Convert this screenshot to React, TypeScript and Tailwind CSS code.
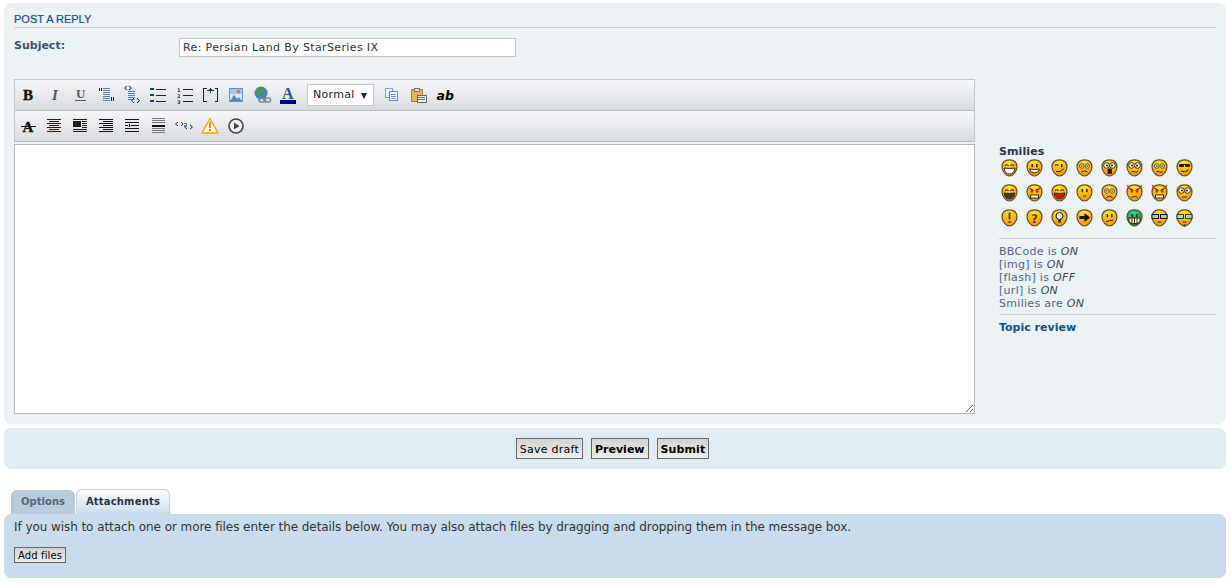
import React from "react";

const IconBox = ({ children, w = 20 }: { children: React.ReactNode; w?: number }) => (
  <svg width={w} height="20" viewBox={`0 0 ${w} 20`} shapeRendering="crispEdges" className="block shrink-0">{children}</svg>
);
const Lines = ({ ys, x1, x2, c = "#222", h = 1 }: { ys: number[]; x1: number; x2: number; c?: string; h?: number }) => (
  <>{ys.map((y) => <rect key={y} x={x1} y={y} width={x2 - x1} height={h} fill={c} />)}</>
);

const T1 = [
  <IconBox key="b"><text x="5" y="15" fontFamily="Liberation Serif" fontWeight="900" fontSize="15" fill="#111" stroke="#111" strokeWidth=".4" shapeRendering="auto">B</text></IconBox>,
  <IconBox key="i"><text x="8" y="15" fontFamily="Liberation Serif" fontStyle="italic" fontWeight="700" fontSize="15" fill="#555" shapeRendering="auto">I</text></IconBox>,
  <IconBox key="u"><text x="6" y="13" fontFamily="Liberation Serif" fontWeight="700" fontSize="13" fill="#555" shapeRendering="auto">U</text><rect x="5" y="15" width="11" height="1" fill="#555" /></IconBox>,
  <IconBox key="q"><rect x="3" y="3" width="1" height="3" fill="#222"/><rect x="5" y="3" width="1" height="3" fill="#222"/><Lines ys={[3,5,7,9,11,13,15]} x1={7} x2={14} c="#5a7fc4"/><rect x="15" y="12" width="1" height="4" fill="#222"/><rect x="17" y="12" width="1" height="4" fill="#222"/></IconBox>,
  <IconBox key="c">
    <path d="M5 1 L2.5 3 L5 5 M7 1 L9.5 3 L7 5" fill="none" stroke="#222" shapeRendering="auto"/>
    <Lines ys={[6,8,10,12,14]} x1={6} x2={13} c="#5a7fc4"/>
    <path d="M12 13 L9.5 15.5 L12 18 M15 13 L17.5 15.5 L15 18" fill="none" stroke="#222" shapeRendering="auto"/>
  </IconBox>,
  <IconBox key="ul"><Lines ys={[3,9,15]} x1={2} x2={6} c="#153a8a" h={2}/><Lines ys={[4,10,16]} x1={8} x2={18} c="#222"/></IconBox>,
  <IconBox key="ol">
    <g fontFamily="DejaVu Sans" fontWeight="700" fontSize="5" fill="#153a8a" shapeRendering="auto"><text x="3" y="6.5">1</text><text x="3" y="12.5">2</text><text x="3" y="18.5">3</text></g>
    <Lines ys={[4,10,16]} x1={9} x2={19} c="#222"/>
  </IconBox>,
  <IconBox key="li">
    <path d="M6.5 3.5H3.5V16.5H6.5M14.5 3.5H17.5V16.5H14.5" fill="none" stroke="#222"/>
    <path d="M7 5.5H14M10 3V8M9 4H12" stroke="#153a8a" fill="none"/>
  </IconBox>,
  <IconBox key="img">
    <rect x="3.5" y="3.5" width="13" height="13" fill="#dbe7f3" stroke="#6b8fb5"/>
    <path d="M4 9H16V4H4Z" fill="#a9c7e6"/>
    <rect x="11" y="5" width="3" height="3" fill="#e8743a"/>
    <path d="M4 16 L8 10 L13 16Z M9 16 L13 12 L16 16Z" fill="#5d84ad" shapeRendering="auto"/>
  </IconBox>,
  <IconBox key="url">
    <circle cx="9" cy="8" r="6.5" fill="#3f83c9" shapeRendering="auto"/>
    <path d="M5 4 L10 2 L13 6 L9 8 L10 12 L6 11 L4 7Z" fill="#4d9a3e" shapeRendering="auto"/>
    <g fill="none" stroke="#7a8590" strokeWidth="1.5" shapeRendering="auto"><rect x="7" y="13" width="6.5" height="4" rx="2"/><rect x="12" y="13" width="6.5" height="4" rx="2"/></g>
  </IconBox>,
  <IconBox key="a"><text x="4" y="14" fontFamily="Liberation Serif" fontWeight="700" fontSize="16" fill="#33548f" shapeRendering="auto">A</text><rect x="2" y="15" width="16" height="4" fill="#00008b"/></IconBox>,
];

const T2 = [
  <IconBox key="s"><text x="4.5" y="16" fontFamily="Liberation Serif" fontWeight="900" fontSize="15" fill="#111" stroke="#111" strokeWidth=".3" shapeRendering="auto">A</text><rect x="3" y="10" width="15" height="1" fill="#111"/></IconBox>,
  <IconBox key="ac"><Lines ys={[3,7,11,15]} x1={3} x2={17} c="#2a1a14"/><Lines ys={[5,9,13]} x1={5} x2={15} c="#2a1a14"/></IconBox>,
  <IconBox key="fl"><Lines ys={[3,13,15]} x1={3} x2={17} c="#2a1a14"/><rect x="3" y="5" width="8" height="6" fill="#2a1a14"/><Lines ys={[5,7,9,11]} x1={12} x2={17} c="#2a1a14"/></IconBox>,
  <IconBox key="ar"><Lines ys={[3,7,11,15]} x1={3} x2={17} c="#111"/><Lines ys={[5,9,13]} x1={7} x2={17} c="#111"/></IconBox>,
  <IconBox key="in"><Lines ys={[3,6,12,15]} x1={3} x2={17} c="#111"/><Lines ys={[9]} x1={3} x2={6} c="#111"/><Lines ys={[9]} x1={9} x2={17} c="#111"/><rect x="7" y="8" width="1" height="3" fill="#111"/></IconBox>,
  <IconBox key="hr"><Lines ys={[2,4,6,12,14,16]} x1={4} x2={17} c="#777"/><rect x="4" y="9" width="13" height="2" fill="#111"/></IconBox>,
  <IconBox key="cd">
    <path d="M4 6 L1.5 8 L4 10 M7 6 L9 8 L7 10 M13 9 L10.5 11 L13 13 M16 9 L18.5 11 L16 13" fill="none" stroke="#333" shapeRendering="auto"/>
    <path d="M10 7.5H12.5V9H10V10.5H12.5" fill="none" stroke="#5a7fc4" />
  </IconBox>,
  <IconBox key="w">
    <path d="M10 2.5 L18 17 H2Z" fill="#fff8df" stroke="#f5a400" strokeWidth="1.3" strokeLinejoin="round" shapeRendering="auto"/>
    <rect x="9" y="6" width="2" height="6" fill="#e88d00"/><rect x="9" y="13" width="2" height="2" fill="#e88d00"/>
  </IconBox>,
  <IconBox key="p">
    <circle cx="10" cy="10" r="7" fill="#eef0f2" stroke="#444" strokeWidth="1.6" shapeRendering="auto"/>
    <path d="M8 6.5 L13.5 10 L8 13.5Z" fill="#444" shapeRendering="auto"/>
  </IconBox>,
];

const T3 = [
  <IconBox key="cp">
    <rect x="3.5" y="3.5" width="7" height="9" fill="#eef4fc" stroke="#7da0d6"/>
    <rect x="7.5" y="6.5" width="8" height="9" fill="#fafcff" stroke="#5f8ccc"/>
    <Lines ys={[9,11,13]} x1={9} x2={14} c="#5f8ccc"/>
  </IconBox>,
  <IconBox key="pa">
    <rect x="3" y="4" width="11" height="12" fill="#e3b84a" stroke="#a08530" />
    <rect x="6" y="3" width="5" height="3" fill="#d9d9cc" stroke="#777"/>
    <rect x="9" y="10" width="9" height="7" fill="#eeeeee" stroke="#666"/>
    <Lines ys={[12,14]} x1={10} x2={17} c="#777"/>
  </IconBox>,
  <IconBox key="ab"><text x="2.5" y="15" fontFamily="DejaVu Sans" fontStyle="italic" fontWeight="700" fontSize="12.5" fill="#000" shapeRendering="auto">ab</text></IconBox>,
];

type Face = { fill?: string; eyes?: "dot" | "big" | "shade" | "glass" | "closed" | "angry" | "wink" | "none"; mouth?: string; mfill?: string; extra?: React.ReactNode };

const Smiley = ({ fill = "#fdb10e", eyes = "dot", mouth = "", mfill = "none", extra }: Face) => (
  <svg width="17" height="18" viewBox="0 0 17 18" className="block">
    <defs>
      <radialGradient id={`g${fill.slice(1)}`} cx="45%" cy="15%" r="85%">
        <stop offset="0" stopColor={fill === "#fdb10e" ? "#ffe81e" : "#30d888"} />
        <stop offset="1" stopColor={fill === "#fdb10e" ? "#f79000" : "#06803f"} />
      </radialGradient>
    </defs>
    <path d="M8.5 .8 C13.5 .8 16 3.5 16 8 C16 12.5 12 17 8.5 17 C5 17 1 12.5 1 8 C1 3.5 3.5 .8 8.5 .8Z" fill={`url(#g${fill.slice(1)})`} stroke="#5e5030" strokeWidth="1.2" />
    {eyes === "dot" && <><rect x="5.5" y="5" width="1.6" height="3.2" fill="#3a2808" /><rect x="10" y="5" width="1.6" height="3.2" fill="#3a2808" /></>}
    {eyes === "closed" && <path d="M4 7 Q5.8 4.5 7.5 7 M9.5 7 Q11.2 4.5 13 7" stroke="#3a2808" strokeWidth="1.1" fill="none" />}
    {eyes === "wink" && <><path d="M4 6.5 Q5.8 5 7.5 6.5" stroke="#3a2808" strokeWidth="1.1" fill="none" /><rect x="10" y="5" width="1.6" height="3.2" fill="#3a2808" /></>}
    {eyes === "big" && <><circle cx="5.5" cy="6.5" r="2.8" fill="#fff" stroke="#3a2808" /><circle cx="11.5" cy="6.5" r="2.8" fill="#fff" stroke="#3a2808" /><circle cx="6" cy="6.5" r="1" fill="#111" /><circle cx="11" cy="6.5" r="1" fill="#111" /></>}
    {eyes === "glass" && <><circle cx="5.8" cy="7" r="2.3" fill="#ecd8a0" stroke="#6a5a30" /><circle cx="11.2" cy="7" r="2.3" fill="#ecd8a0" stroke="#6a5a30" /><rect x="5.3" y="6" width="1" height="2" fill="#555" /><rect x="10.7" y="6" width="1" height="2" fill="#555" /></>}
    {eyes === "shade" && <><rect x="3" y="5" width="5" height="3" rx="1" fill="#221a02" /><rect x="9" y="5" width="5" height="3" rx="1" fill="#221a02" /><rect x="7" y="5" width="3" height="1" fill="#221a02" /></>}
    {eyes === "angry" && <><path d="M3.5 4.5 L7.5 6.5 M13.5 4.5 L9.5 6.5" stroke="#3a1005" strokeWidth="1.1" /><circle cx="5.8" cy="7.5" r="1.3" fill="#e01808" /><circle cx="11.2" cy="7.5" r="1.3" fill="#e01808" /></>}
    {mouth && <path d={mouth} fill={mfill} stroke="#3a2808" strokeWidth="1" />}
    {extra}
  </svg>
);

const HORN = <path d="M2 5 L.8 .8 L4.5 2.5Z M15 5 L16.2 .8 L12.5 2.5Z" fill="#c8301a" />;
const bigSmile = "M3 9 Q8.5 10 14 9 Q13 15 8.5 15 Q4 15 3 9Z";

const faces: Face[] = [
  { eyes: "closed", mouth: bigSmile, mfill: "#fff" },
  { eyes: "dot", mouth: "M3.5 10 Q8.5 11 13.5 10 Q12.5 14 8.5 14 Q4.5 14 3.5 10Z", mfill: "#fff" },
  { eyes: "wink", mouth: "M5 12.5 Q9.5 14 13 9.5" },
  { eyes: "glass", mouth: "M5.5 13 Q8.5 10.5 11.5 13" },
  { eyes: "big", mouth: "M7 10H10.5V14.5H7Z", mfill: "#1e1203" },
  { eyes: "big", mouth: "M5.5 13 Q7 11.5 8.5 13 Q10 14 12 12" },
  { eyes: "glass", mouth: "M5.5 13 Q7 11.5 8.5 13 Q10 14 11.5 12.5" },
  { eyes: "shade", mouth: "M5 12 Q8.5 14 12.5 11" },
  { eyes: "closed", mouth: bigSmile, mfill: "#3a3a3a" },
  { eyes: "angry", mouth: "M4.5 11 H12.5 V14 H4.5Z", mfill: "#fff" },
  { eyes: "closed", mouth: bigSmile, mfill: "#d9141a" },
  { eyes: "dot", mouth: "M7 12.5 Q8.5 11 10 12.5" },
  { eyes: "glass", mouth: "M5.5 13.5 Q8.5 10.5 11.5 13.5" },
  { eyes: "angry", mouth: "M5.5 13.5 Q8.5 11 11.5 13.5", extra: HORN },
  { eyes: "angry", mouth: "M4.5 11 H12.5 V14 H4.5Z", mfill: "#fff", extra: HORN },
  { eyes: "big", mouth: "M6 13 H11" },
  { eyes: "none", extra: <><rect x="7.5" y="3.5" width="2" height="7" fill="#5d4208" /><rect x="7.5" y="12" width="2" height="2" fill="#5d4208" /></> },
  { eyes: "none", extra: <text x="8.5" y="14" textAnchor="middle" fontFamily="DejaVu Sans" fontWeight="700" fontSize="12" fill="#5d4208">?</text> },
  { eyes: "none", extra: <><circle cx="8.5" cy="7" r="3.5" fill="#fff" stroke="#111" /><rect x="7.2" y="10" width="2.6" height="3.5" fill="#111" /></> },
  { eyes: "none", extra: <path d="M3.5 7 H8.5 V4 L14 8.5 L8.5 13 V10 H3.5Z" fill="#111" /> },
  { eyes: "dot", mouth: "M5 12.5 L12 11" },
  { fill: "#12b060", eyes: "dot", mouth: "M3 9 H14 V13 Q8.5 16.5 3 13Z M6 9 V14.5 M8.5 9 V15 M11 9 V14.5", mfill: "#fff" },
  { eyes: "none", mouth: "M6.5 13 H10.5", extra: <><rect x="1" y="5.5" width="6.5" height="4" fill="#a8e060" stroke="#111" /><rect x="9.5" y="5.5" width="6.5" height="4" fill="#a8e060" stroke="#111" /></> },
  { eyes: "none", mouth: "M6.5 13 H10.5", extra: <><rect x="1" y="5.5" width="6.5" height="4" fill="#9fe0c0" stroke="#333" /><rect x="9.5" y="5.5" width="6.5" height="4" fill="#9fe0c0" stroke="#333" /><rect x="7.5" y="15" width="2" height="3" fill="#555" /></> },
];

const V = "font-['DejaVu_Sans',Verdana,sans-serif]";
const BTN = "h-[21px] pt-[3px] px-[3px] border border-[#666] bg-gradient-to-b from-[#d2d2d2] to-[#efefef] text-[11px] text-black";

export default function App() {
  return (
    <div className={`w-[1231px] h-[585px] bg-white overflow-hidden pt-[3px] px-1 ${V} text-[11px] text-[#333]`}>
      <div className="w-[1222px] h-[421px] bg-[#ecf1f3] rounded-[7px] px-[10px] pt-[10px]">
        <h3 className="font-['Liberation_Sans',Arial,sans-serif] text-[11px] leading-[13px] text-[#115098] border-b border-[#ccd0d3] pb-px uppercase [-webkit-text-stroke:0.2px_#115098]">Post a reply</h3>
        <div className="flex mt-[10px] h-[20px]">
          <label className="w-[165px] font-bold text-[#425067] leading-[15px]">Subject:</label>
          <div className="w-[337px] h-[19px] bg-white border border-[#c7c3bf] px-[3px] text-[11px] leading-[18px] text-[#333] tracking-[0.37px]">Re: Persian Land By StarSeries IX</div>
        </div>
        <div className="flex mt-[21px]">
          <div className="w-[961px] shrink-0">
            <div className="h-[63px] border border-[#c3c8cc] border-b-[#b9bec3]">
              <div className="h-[31px] flex items-center pl-[3px] border-b border-[#b9bec3] bg-gradient-to-b from-[#f6f7f9] to-[#d8dbe0]">
                <div className="flex gap-[6px]">{T1}</div>
                <div className="ml-[9px] w-[67px] h-[22px] bg-white border border-[#c7c9cc] flex items-center justify-between pl-[5px] pr-[6px] pt-px text-[11px] text-[#222] tracking-[0.3px]">
                  <span>Normal</span>
                  <svg width="6" height="6" viewBox="0 0 6 6"><path d="M0 0H6L3 6Z" fill="#222" /></svg>
                </div>
                <div className="flex gap-[6px] ml-[8px]">{T3}</div>
              </div>
              <div className="h-[30px] flex items-center pl-[3px] bg-gradient-to-b from-[#f6f7f9] to-[#d8dbe0]">
                <div className="flex gap-[6px]">{T2}</div>
              </div>
            </div>
            <div className="relative mt-[2px] h-[270px] bg-white border border-[#b4babf]">
              <svg width="10" height="10" viewBox="0 0 10 10" className="absolute right-0 bottom-0"><path d="M9 2 L2 9 M9 6 L6 9" stroke="#666" /></svg>
            </div>
          </div>
          <aside className="w-[217px] ml-[24px] pt-[66px]">
            <h4 className="font-bold text-[11px] leading-[14px] text-[#28313f] tracking-[0.1px]">Smilies</h4>
            <div className="grid grid-cols-[repeat(8,25px)] auto-rows-[25px] pb-[3px]">
              {faces.map((f, i) => <div key={i} className="pl-[2px]"><Smiley {...f} /></div>)}
            </div>
            <div className="border-t border-[#ccd0d3] mt-[1px] pt-[6px] text-[11px] leading-[13px] text-[#536482] tracking-[0.3px]">
              <div>BBCode is <em className="text-[#3d4757]">ON</em></div>
              <div>[img] is <em className="text-[#3d4757]">ON</em></div>
              <div>[flash] is <em className="text-[#3d4757]">OFF</em></div>
              <div>[url] is <em className="text-[#3d4757]">ON</em></div>
              <div>Smilies are <em className="text-[#3d4757]">ON</em></div>
            </div>
            <div className="border-t border-[#ccd0d3] mt-[4px] pt-[6px] font-bold text-[#105289] leading-[13px]">Topic review</div>
          </aside>
        </div>
      </div>
      <div className="w-[1222px] h-[41px] mt-[4px] bg-[#e1ebf2] rounded-[7px] flex items-center justify-center gap-[8px] pr-[5px]">
        <button className={`${BTN} tracking-[0.25px]`}>Save draft</button>
        <button className={`${BTN} font-bold`}>Preview</button>
        <button className={`${BTN} font-bold tracking-[0.1px]`}>Submit</button>
      </div>
      <div className="flex mt-[20px] ml-[7px] h-[25px] items-end gap-px">
        <div className="h-[24px] w-[64px] rounded-t-[6px] bg-[#b8cbda] text-center font-bold text-[10px] leading-[24px] text-[#536482] tracking-[0.05px]">Options</div>
        <div className="h-[25px] w-[94px] rounded-t-[6px] border border-b-0 border-[#c5d2de] bg-gradient-to-b from-[#ffffff] to-[#cadceb] text-center font-bold text-[10px] leading-[24px] text-[#28313f] tracking-[0.18px]">Attachments</div>
      </div>
      <div className="w-[1222px] h-[64px] bg-[#cadceb] rounded-[7px] pl-[10px] pt-[5px]">
        <p className="text-[12px] leading-[16px] text-[#333] tracking-[-0.066px]">If you wish to attach one or more files enter the details below. You may also attach files by dragging and dropping them in the message box.</p>
        <button className="block mt-[12px] h-[16px] w-[52px] pt-px border border-[#666] bg-gradient-to-b from-[#d2d2d2] to-[#efefef] text-[10px] leading-[14px] text-black tracking-[0.12px]">Add files</button>
      </div>
    </div>
  );
}
